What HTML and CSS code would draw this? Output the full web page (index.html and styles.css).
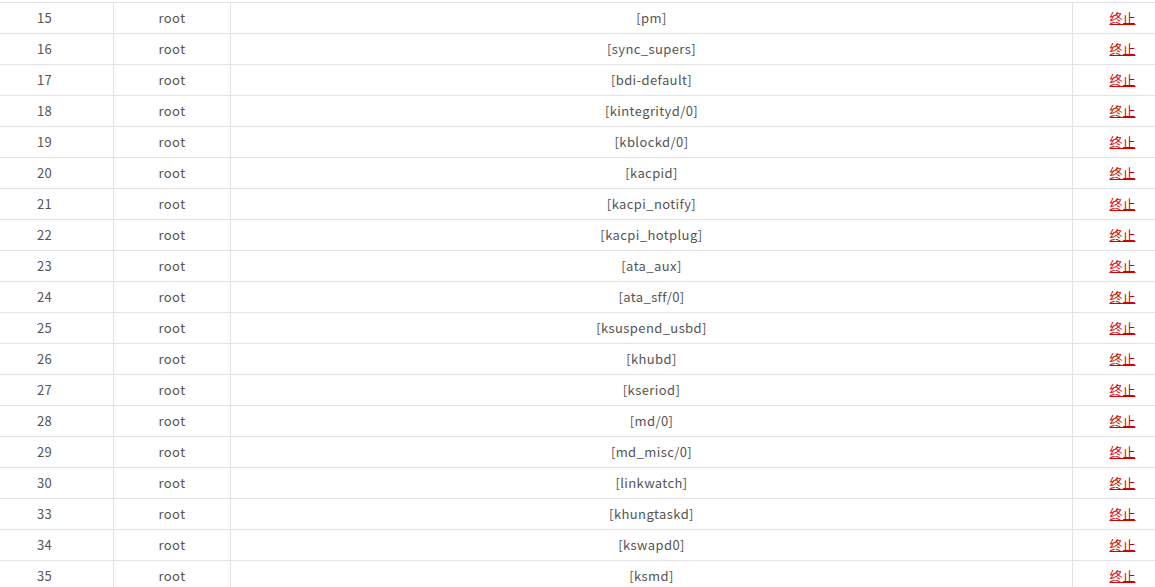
FILE: index.html
```html
<!DOCTYPE html>
<html lang="zh-CN">
<head>
<meta charset="utf-8">
<title>进程列表</title>
<link rel="stylesheet" href="styles.css">
</head>
<body>
<table class="proc">
<colgroup><col class="c-pid"><col class="c-user"><col class="c-cmd"><col class="c-op"></colgroup>
<tbody>
<tr><td class="pid">15</td><td>root</td><td>[pm]</td><td class="op"><a href="#">终止</a></td></tr>
<tr><td class="pid">16</td><td>root</td><td>[sync_supers]</td><td class="op"><a href="#">终止</a></td></tr>
<tr><td class="pid">17</td><td>root</td><td>[bdi-default]</td><td class="op"><a href="#">终止</a></td></tr>
<tr><td class="pid">18</td><td>root</td><td>[kintegrityd/0]</td><td class="op"><a href="#">终止</a></td></tr>
<tr><td class="pid">19</td><td>root</td><td>[kblockd/0]</td><td class="op"><a href="#">终止</a></td></tr>
<tr><td class="pid">20</td><td>root</td><td>[kacpid]</td><td class="op"><a href="#">终止</a></td></tr>
<tr><td class="pid">21</td><td>root</td><td>[kacpi_notify]</td><td class="op"><a href="#">终止</a></td></tr>
<tr><td class="pid">22</td><td>root</td><td>[kacpi_hotplug]</td><td class="op"><a href="#">终止</a></td></tr>
<tr><td class="pid">23</td><td>root</td><td>[ata_aux]</td><td class="op"><a href="#">终止</a></td></tr>
<tr><td class="pid">24</td><td>root</td><td>[ata_sff/0]</td><td class="op"><a href="#">终止</a></td></tr>
<tr><td class="pid">25</td><td>root</td><td>[ksuspend_usbd]</td><td class="op"><a href="#">终止</a></td></tr>
<tr><td class="pid">26</td><td>root</td><td>[khubd]</td><td class="op"><a href="#">终止</a></td></tr>
<tr><td class="pid">27</td><td>root</td><td>[kseriod]</td><td class="op"><a href="#">终止</a></td></tr>
<tr><td class="pid">28</td><td>root</td><td>[md/0]</td><td class="op"><a href="#">终止</a></td></tr>
<tr><td class="pid">29</td><td>root</td><td>[md_misc/0]</td><td class="op"><a href="#">终止</a></td></tr>
<tr><td class="pid">30</td><td>root</td><td>[linkwatch]</td><td class="op"><a href="#">终止</a></td></tr>
<tr><td class="pid">33</td><td>root</td><td>[khungtaskd]</td><td class="op"><a href="#">终止</a></td></tr>
<tr><td class="pid">34</td><td>root</td><td>[kswapd0]</td><td class="op"><a href="#">终止</a></td></tr>
<tr><td class="pid">35</td><td>root</td><td>[ksmd]</td><td class="op"><a href="#">终止</a></td></tr>
</tbody>
</table>
</body>
</html>
```

FILE: styles.css
```css
html, body {
  margin: 0;
  padding: 0;
  background: #fff;
}
body {
  padding-top: 2px;
  font-family: "Noto Sans CJK SC", "Open Sans", sans-serif;
  font-size: 13px;
  color: #555;
  overflow: hidden;
}
.proc {
  width: 1155px;
  border-collapse: separate;
  border-spacing: 0;
  table-layout: fixed;
}
.c-pid { width: 113px; }
.c-user { width: 117px; }
.c-cmd { width: 842px; }
.c-op { width: 83px; }
.proc td {
  box-sizing: border-box;
  height: 31px;
  padding: 0 0 1px 0;
  text-align: center;
  vertical-align: middle;
  border-top: 1px solid #e3e3e3;
  letter-spacing: 0.4px;
  white-space: nowrap;
}
.proc td + td {
  border-left: 1px solid #e3e3e3;
}
.proc td.pid {
  padding-right: 24px;
}
.proc td.op {
  padding-left: 17px;
}
.op a {
  color: #d40000;
  text-decoration: underline;
  letter-spacing: 0;
}
```
